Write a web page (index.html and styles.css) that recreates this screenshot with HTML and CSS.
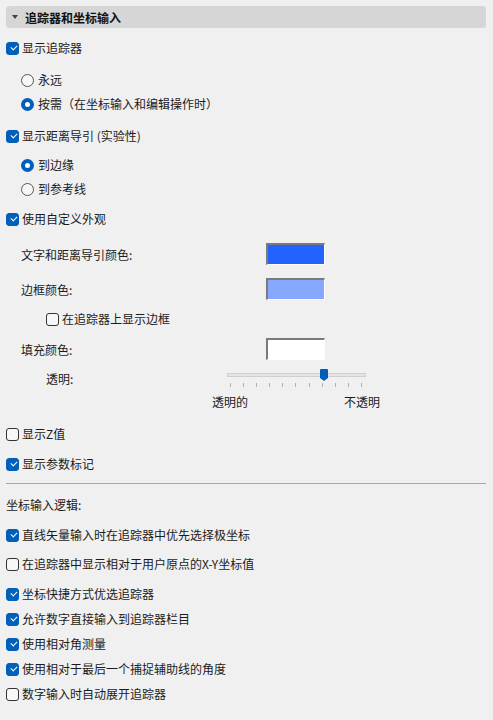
FILE: index.html
```html
<!DOCTYPE html>
<html lang="zh">
<head>
<meta charset="utf-8">
<link rel="stylesheet" href="styles.css">
</head>
<body>
<div class="panel">
  <div class="header"><span class="tri"></span><span class="htitle">追踪器和坐标输入</span></div>

  <div class="row g10"><span class="cb on"></span><span>显示追踪器</span></div>
  <div class="row g12 ind1"><span class="rb"></span><span>永远</span></div>
  <div class="row g4 ind1"><span class="rb on"></span><span>按需（在坐标输入和编辑操作时）</span></div>
  <div class="row g12"><span class="cb on"></span><span>显示距离导引 (实验性)</span></div>
  <div class="row g9 ind1"><span class="rb on"></span><span>到边缘</span></div>
  <div class="row g4 ind1"><span class="rb"></span><span>到参考线</span></div>
  <div class="row g10"><span class="cb on"></span><span>使用自定义外观</span></div>

  <div class="crow g14"><span class="clabel">文字和距离导引颜色:</span><span class="sw blue"></span></div>
  <div class="crow g13"><span class="clabel">边框颜色:</span><span class="sw light"></span></div>
  <div class="row g9 ind2"><span class="cb"></span><span>在追踪器上显示边框</span></div>
  <div class="crow g9"><span class="clabel">填充颜色:</span><span class="sw white"></span></div>

  <div class="srow g9">
    <span class="slabel">透明:</span>
    <div class="slider">
      <div class="track"></div>
      <div class="thumb"></div>
      <div class="ticks"><i></i><i></i><i></i><i></i><i></i><i></i><i></i><i></i><i></i><i></i><i></i></div>
    </div>
  </div>
  <div class="lrow g3"><span>透明的</span><span>不透明</span></div>

  <div class="row g12"><span class="cb"></span><span>显示Z值</span></div>
  <div class="row g10"><span class="cb on"></span><span>显示参数标记</span></div>
  <div class="sep"></div>
  <div class="row g11 plain"><span>坐标输入逻辑:</span></div>
  <div class="row g10"><span class="cb on"></span><span>直线矢量输入时在追踪器中优先选择极坐标</span></div>
  <div class="row g9"><span class="cb"></span><span>在追踪器中显示相对于用户原点的X-Y坐标值</span></div>
  <div class="row g10"><span class="cb on"></span><span>坐标快捷方式优选追踪器</span></div>
  <div class="row g5"><span class="cb on"></span><span>允许数字直接输入到追踪器栏目</span></div>
  <div class="row g5"><span class="cb on"></span><span>使用相对角测量</span></div>
  <div class="row g5"><span class="cb on"></span><span>使用相对于最后一个捕捉辅助线的角度</span></div>
  <div class="row g5"><span class="cb"></span><span>数字输入时自动展开追踪器</span></div>
</div>
</body>
</html>
```
FILE: styles.css
```css
* { box-sizing: border-box; }
html, body { margin: 0; padding: 0; }
body {
  background: #f0f0f0;
  color: #1b1b1b;
  font-family: "Noto Sans CJK SC", "Noto Sans", sans-serif;
  font-size: 12px;
  width: 493px;
  height: 720px;
  overflow: hidden;
}
.panel { padding: 6px 7px 0 6px; display: flex; flex-direction: column; }
.header {
  height: 22px;
  background: #d6d6d6;
  border-radius: 3px;
  display: flex;
  align-items: center;
  padding-left: 6px;
}
.tri {
  width: 0; height: 0;
  border-left: 3.5px solid transparent;
  border-right: 3.5px solid transparent;
  border-top: 4px solid #444;
  margin-right: 7px;
}
.htitle { font-weight: 700; font-size: 12px; color: #111; }

.row { height: 20px; display: flex; align-items: center; gap: 3px; line-height: 20px; white-space: nowrap; }
.ind1 { padding-left: 15px; gap: 4px; }
.ind2 { padding-left: 40px; }
.plain { gap: 0; }

.g3 { margin-top: 3px; }
.g4 { margin-top: 4px; }
.g5 { margin-top: 5px; }
.g9 { margin-top: 9px; }
.g10 { margin-top: 10px; }
.g11 { margin-top: 11px; }
.g12 { margin-top: 12px; }
.g13 { margin-top: 13px; }
.g14 { margin-top: 14px; }

.cb {
  width: 13px; height: 13px;
  border: 1px solid #333;
  border-radius: 3px;
  background: #f7f7f7;
  position: relative;
  flex: none;
}
.cb.on { background: #005fb8; border-color: #005fb8; }
.cb.on::after {
  content: "";
  position: absolute;
  left: 3.5px; top: 2.5px;
  width: 5px; height: 3px;
  border-left: 1.2px solid #fff;
  border-bottom: 1.2px solid #fff;
  transform: rotate(-45deg);
}
.rb {
  width: 13px; height: 13px;
  border: 1px solid #555;
  border-radius: 50%;
  background: #f7f7f7;
  flex: none;
}
.rb.on { border: 4px solid #005fb8; background: #fff; }

.crow { height: 22px; display: flex; align-items: center; padding-left: 15px; }
.clabel { width: 245px; }
.sw {
  width: 59px; height: 22px;
  border-top: 2px solid #7a7a7a;
  border-left: 2px solid #7a7a7a;
  border-right: 1px solid #fff;
  border-bottom: 1px solid #fff;
}
.sw.blue { background: #2262ff; }
.sw.light { background: #86a9ff; }
.sw.white { background: #ffffff; }

.srow { height: 20px; display: flex; align-items: flex-start; padding-left: 40px; }
.slabel { width: 181px; line-height: 20px; }
.slider { position: relative; width: 140px; height: 20px; }
.track {
  position: absolute; left: 0; top: 4px;
  width: 139px; height: 4px;
  background: #e4e4e4;
  border: 1px solid #cfcfcf;
}
.thumb {
  position: absolute; left: 93px; top: 0;
  width: 8px; height: 9px;
  background: #005fb8;
  border-radius: 1px 1px 0 0;
}
.thumb::after {
  content: "";
  position: absolute; left: 0; top: 9px;
  border-left: 4px solid transparent;
  border-right: 4px solid transparent;
  border-top: 3px solid #005fb8;
}
.ticks {
  position: absolute; left: 3px; top: 14px;
  width: 132px;
  display: flex; justify-content: space-between;
}
.ticks i { display: block; width: 1px; height: 4px; background: #b4b4b4; }

.lrow { height: 20px; display: flex; align-items: center; padding-left: 206px; line-height: 20px; }
.lrow span:first-child { width: 132px; }

.sep { margin-top: 9px; height: 1px; background: #a8a8a8; }
```
